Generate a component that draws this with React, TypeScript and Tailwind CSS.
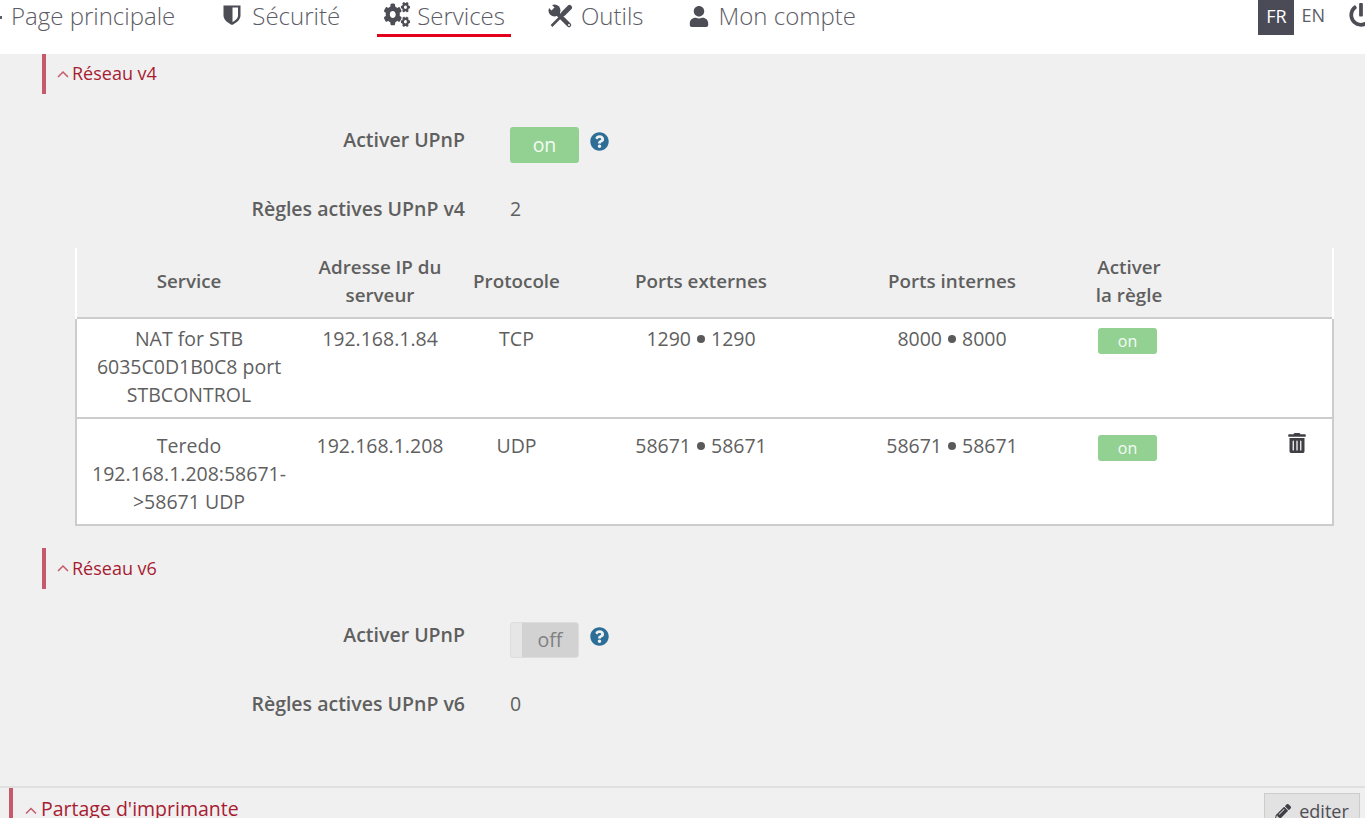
import type { ReactNode } from "react";
import {
  FaCogs,
  FaPencilAlt,
  FaPowerOff,
  FaQuestionCircle,
  FaTrashAlt,
  FaUser,
} from "react-icons/fa";

function ShieldIcon() {
  return (
    <svg viewBox="0 0 18 20" className="mr-[11px] h-[20px] w-[18px]" fill="#4d4d55">
      <path d="M0.500 0.500h17v10c0 4.500-4.500 7.500-8.500 9.500C5 18 0.500 15 0.500 10.500z" />
      <path d="M9.500 2.500h5.500v8c0 3-2.800 5-5.500 6.500z" fill="#fff" />
    </svg>
  );
}

function ToolsIcon() {
  return (
    <svg viewBox="0 0 25 25" className="mr-[8px] h-[25px] w-[25px]" fill="none">
      <path d="M15 10.500 3.500 22" stroke="#4d4d55" strokeWidth="2.500" />
      <path d="M15.500 9.500 21.500 3.500" stroke="#4d4d55" strokeWidth="5" strokeLinecap="round" />
      <path d="M8.500 8.500 21 21" stroke="#4d4d55" strokeWidth="4.500" strokeLinecap="round" />
      <circle cx="6.500" cy="6.500" r="6" fill="#4d4d55" />
      <path d="M2-1 6.500 3.500 3.500 6.500-1 2z" fill="#ffffff" />
      <circle cx="21" cy="21" r="1" fill="#ffffff" />
    </svg>
  );
}

function ChevronUp({ className }: { className: string }) {
  return (
    <svg viewBox="0 0 12 8" className={className} fill="none" stroke="#c45a6b" strokeWidth="1.500">
      <path d="M1 7 6 2l5 5" />
    </svg>
  );
}

function SectionTitle({ title, tall }: { title: string; tall?: boolean }) {
  return (
    <div
      className={`ml-[42px] flex ${tall ? "h-[41px]" : "h-[40px]"} items-center border-l-4 border-[#c45a6b] pb-[2px] pl-[11px] text-[18px] text-[#a81c32]`}
    >
      <ChevronUp className="mr-[3px] mt-[1px] h-[8px] w-[12px]" />
      {title}
    </div>
  );
}

function UpnpForm({ on, label, count }: { on: boolean; label: string; count: string }) {
  return (
    <div className="flex flex-col">
      <div className="flex h-[36px] items-start">
        <div className="w-[465px] text-right text-[19.500px] font-semibold leading-[26px] text-[#5f5f5f]">
          Activer UPnP
        </div>
        <div className="ml-[45px]">
          {on ? (
            <div className="flex h-[36px] w-[69px] items-center justify-center rounded-[3px] bg-[#93d193] text-[#f4fbf4]">
              on
            </div>
          ) : (
            <div className="flex h-[36px] w-[69px] rounded-[3px] border border-[#dddddd] bg-[#e6e6e6]">
              <div className="ml-[11px] flex flex-1 items-center justify-center rounded-r-[3px] bg-[#d2d2d2] text-[#808080]">
                off
              </div>
            </div>
          )}
        </div>
        <FaQuestionCircle className="ml-[11px] mt-[5px] h-[19px] w-[19px] text-[#2c6e95]" />
      </div>
      <div className="mt-[32px] flex h-[28px] items-center">
        <div className="w-[465px] text-right text-[19.500px] font-semibold text-[#5f5f5f]">{label}</div>
        <div className="ml-[45px] text-[#5f5f5f]">{count}</div>
      </div>
    </div>
  );
}

function RuleSwitch() {
  return (
    <div className="ml-[22px] flex h-[26px] w-[59px] items-center justify-center rounded-[3px] bg-[#93d193] text-[16px] text-[#f4fbf4]">
      on
    </div>
  );
}

function Ports({ value }: { value: string }) {
  return (
    <span className="inline-flex items-center">
      {value}
      <span className="mx-[6px] inline-block h-[8px] w-[8px] rounded-full bg-[#5a5a5a]" />
      {value}
    </span>
  );
}

function Cell({ children, pt }: { children: ReactNode; pt: string }) {
  return <td className={`${pt} pb-[7px] align-top text-center`}>{children}</td>;
}

function HeadCell({ children }: { children?: ReactNode }) {
  return <th className="pb-[4px] text-[18.800px] font-semibold">{children}</th>;
}

export default function App() {
  return (
    <div className="h-[818px] w-full overflow-hidden bg-[#f0f0f0] font-['Open_Sans',sans-serif] text-[19.500px] leading-[28px] text-[#5f5f5f]">
      <header className="flex h-[54px] items-start bg-white">
        <div className="relative flex h-[32px] items-center pl-[11px] text-[24px] font-light text-[#5c5c66]">
          <span className="absolute left-0 top-[16px] h-[3px] w-[2px] bg-[#5c5c66]" />
          Page principale
        </div>
        <div className="ml-[48px] flex h-[30px] items-center text-[24px] font-light text-[#5c5c66]">
          <ShieldIcon />
          <span className="mt-[2px]">Sécurité</span>
        </div>
        <div className="ml-[37px] flex h-[37px] items-start border-b-[3px] border-[#e2001a] pl-[7px] pr-[6px] text-[24px] font-light text-[#5c5c66]">
          <FaCogs
            preserveAspectRatio="none"
            className="mr-[7px] mt-[2px] h-[25px] w-[26px] text-[#4d4d55]"
          />
          <span className="leading-[32px]">Services</span>
        </div>
        <div className="ml-[37px] flex h-[32px] items-center text-[24px] font-light text-[#5c5c66]">
          <ToolsIcon />
          Outils
        </div>
        <div className="ml-[45px] flex h-[32px] items-center text-[24px] font-light text-[#5c5c66]">
          <FaUser className="mr-[10px] h-[21px] w-[20px] text-[#4d4d55]" />
          Mon compte
        </div>
        <div className="ml-auto flex items-start">
          <div className="flex h-[35px] w-[36px] items-center justify-center bg-[#4b4b57] pb-[3px] text-[18px] text-white">
            FR
          </div>
          <div className="ml-[7px] flex h-[30px] items-center text-[18px] text-[#5c5c66]">EN</div>
          <FaPowerOff className="ml-[24px] mr-[-8px] mt-[3px] h-[24px] w-[24px] shrink-0 text-[#4d4d55]" />
        </div>
      </header>

      <SectionTitle title="Réseau v4" />
      <div className="mt-[33px]">
        <UpnpForm on label="Règles actives UPnP v4" count="2" />
      </div>

      <table className="ml-[75px] mt-[25px] w-[1259px] table-fixed border-collapse">
        <colgroup>
          <col className="w-[225px]" />
          <col className="w-[158px]" />
          <col className="w-[115px]" />
          <col className="w-[254px]" />
          <col className="w-[248px]" />
          <col className="w-[106px]" />
          <col />
        </colgroup>
        <thead>
          <tr className="h-[70px] border-x-2 border-x-white">
            <HeadCell>Service</HeadCell>
            <HeadCell>
              Adresse IP du
              <br />
              serveur
            </HeadCell>
            <HeadCell>Protocole</HeadCell>
            <HeadCell>Ports externes</HeadCell>
            <HeadCell>Ports internes</HeadCell>
            <HeadCell>
              Activer
              <br />
              la règle
            </HeadCell>
            <HeadCell />
          </tr>
        </thead>
        <tbody className="bg-white">
          <tr className="h-[100px] border-2 border-[#cccccc]">
            <Cell pt="pt-[6px]">
              NAT for STB
              <br />
              6035C0D1B0C8 port
              <br />
              STBCONTROL
            </Cell>
            <Cell pt="pt-[6px]">192.168.1.84</Cell>
            <Cell pt="pt-[6px]">TCP</Cell>
            <Cell pt="pt-[6px]">
              <Ports value="1290" />
            </Cell>
            <Cell pt="pt-[6px]">
              <Ports value="8000" />
            </Cell>
            <td className="pt-[9px] align-top">
              <RuleSwitch />
            </td>
            <td />
          </tr>
          <tr className="h-[107px] border-2 border-[#cccccc]">
            <Cell pt="pt-[13px]">
              Teredo
              <br />
              192.168.1.208:58671-
              <br />
              &gt;58671 UDP
            </Cell>
            <Cell pt="pt-[13px]">192.168.1.208</Cell>
            <Cell pt="pt-[13px]">UDP</Cell>
            <Cell pt="pt-[13px]">
              <Ports value="58671" />
            </Cell>
            <Cell pt="pt-[13px]">
              <Ports value="58671" />
            </Cell>
            <td className="pt-[16px] align-top">
              <RuleSwitch />
            </td>
            <td className="pt-[14px] align-top">
              <FaTrashAlt className="ml-[106px] h-[20px] w-[18px] text-[#3f3f46]" />
            </td>
          </tr>
        </tbody>
      </table>

      <div className="mt-[22px]">
        <SectionTitle title="Réseau v6" tall />
      </div>
      <div className="mt-[33px]">
        <UpnpForm on={false} label="Règles actives UPnP v6" count="0" />
      </div>

      <div className="mt-[68px] flex border-t-2 border-[#e0e0e0]">
        <div className="ml-[9px] flex h-[40px] flex-1 items-start border-l-4 border-[#c45a6b] pl-[12px] pt-[7px] text-[19.500px] text-[#a81c32]">
          <ChevronUp className="mr-[4px] mt-[11px] h-[9px] w-[12px]" />
          Partage d'imprimante
        </div>
        <button
          type="button"
          className="mr-[5px] mt-[5px] flex h-[40px] w-[96px] items-start justify-center border border-[#cccccc] bg-[#e2e2e2] pt-[3px] text-[18px] text-[#4d4d55]"
        >
          <FaPencilAlt className="mr-[8px] mt-[7px] h-[16px] w-[16px] text-[#3f3f46]" />
          editer
        </button>
      </div>
    </div>
  );
}
